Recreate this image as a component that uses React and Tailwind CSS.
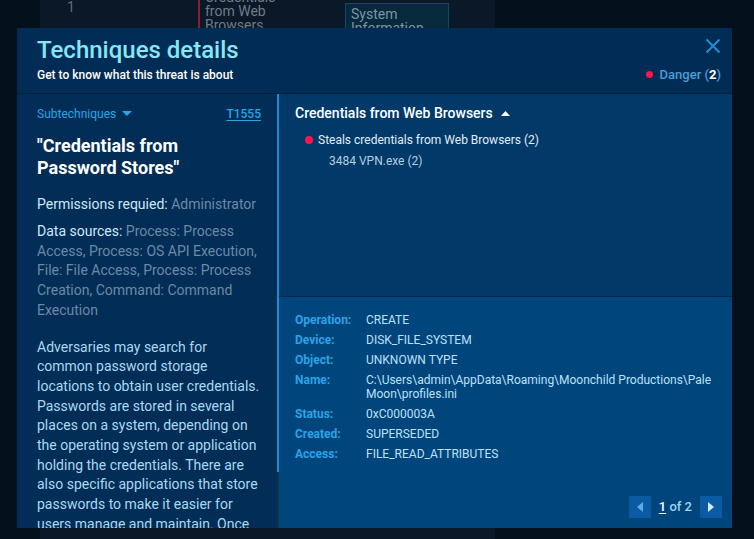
import React from "react";

const rows = [
  ["Operation:", "CREATE"],
  ["Device:", "DISK_FILE_SYSTEM"],
  ["Object:", "UNKNOWN TYPE"],
  ["Name:", "C:\\Users\\admin\\AppData\\Roaming\\Moonchild Productions\\Pale Moon\\profiles.ini"],
  ["Status:", "0xC000003A"],
  ["Created:", "SUPERSEDED"],
  ["Access:", "FILE_READ_ATTRIBUTES"],
];

export default function App() {
  return (
    <div
      className="relative w-[754px] h-[539px] overflow-hidden bg-[#04101c]"
      style={{ fontFamily: "Roboto, 'Noto Sans', sans-serif" }}
    >
      {/* background page */}
      <div className="flex h-full">
        <div className="w-[40px]" />
        <div className="w-[455px] h-full bg-[#0a1828] flex items-start">
          <div className="w-[158px] pl-[27px] text-[14px] text-[#5f6d7b] leading-[14px] pt-0">1</div>
          <div className="w-[147px] h-[28px] border-l-2 border-[#8a1e2e] pl-[5px] overflow-visible">
            <div className="-mt-[10px] text-[14px] leading-[14px] text-[#6f7c88]">
              Credentials
              <br />
              from Web
              <br />
              Browsers
            </div>
          </div>
          <div className="mt-[3px] w-[104px] h-[40px] border border-[#0c4a66] bg-[#062a3c] px-[5px] pt-[3px] text-[14px] leading-[14px] text-[#7d94a6]">
            System
            <br />
            Information
          </div>
        </div>
      </div>

      {/* modal overlay */}
      <div className="absolute left-[17px] top-[28px] w-[715px] h-[500px] flex flex-col bg-[#012c55] overflow-hidden">
        <div className="h-[66px] shrink-0 flex justify-between border-b border-[#01213f] pl-[20px] pr-[11px]">
          <div className="pt-[7px]">
            <div className="text-[24px] leading-[30px] font-medium text-[#86e8f7]">Techniques details</div>
            <div className="mt-[2px] text-[12px] leading-[16px] font-medium text-white">
              Get to know what this threat is about
            </div>
          </div>
          <div className="flex flex-col items-end pt-[10px]">
            <svg width="16" height="16" viewBox="0 0 16 16">
              <path d="M1.5 1.5 L14.5 14.5 M14.5 1.5 L1.5 14.5" stroke="#1d8fd0" strokeWidth="2" fill="none" />
            </svg>
            <div className="mt-[12px] flex items-center text-[13px] leading-[17px] font-medium text-[#4a9fd6]">
              <span className="w-[7px] h-[7px] rounded-full bg-[#ff1450] mr-[7px]" />
              Danger (<span className="text-white font-bold">2</span>)
            </div>
          </div>
        </div>

        <div className="flex flex-1 min-h-0">
          {/* left panel */}
          <div className="relative w-[262px] shrink-0 bg-[#022d56] overflow-hidden">
            <div className="absolute right-0 top-0 w-[2px] h-[378px] bg-[#1a8dd0]" />
            <div className="absolute right-0 top-[378px] bottom-0 w-[2px] bg-[#0a3358]" />
            <div className="pl-[20px] pr-[18px] pt-[12px]">
              <div className="flex justify-between items-center text-[12px] leading-[16px]">
                <div className="flex items-center text-[#27a6e6]">
                  Subtechniques
                  <svg width="10" height="6" viewBox="0 0 10 6" className="ml-[6px]">
                    <path d="M0 0 L10 0 L5 5 Z" fill="#27a6e6" />
                  </svg>
                </div>
                <div className="text-[#27a6e6] font-medium underline underline-offset-2">T1555</div>
              </div>
              <div className="mt-[13px] text-[18px] leading-[22px] font-bold text-white">
                "Credentials from
                <br />
                Password Stores"
              </div>
              <div className="mt-[15px] text-[14px] leading-[20px] text-[#6b8aa6]">
                <span className="text-[#cde8f8]">Permissions requied:</span> Administrator
              </div>
              <div className="mt-[8px] text-[14px] leading-[19.7px] text-[#6b8aa6]">
                <span className="text-[#cde8f8]">Data sources:</span> Process: Process Access, Process: OS API Execution, File: File Access, Process: Process Creation, Command: Command Execution
              </div>
              <div className="mt-[17px] text-[14px] leading-[19.7px] text-[#a9d9f2]">
                Adversaries may search for common password storage locations to obtain user credentials. Passwords are stored in several places on a system, depending on the operating system or application holding the credentials. There are also specific applications that store passwords to make it easier for users manage and maintain. Once credentials are obtained, they can be used to perform lateral movement.
              </div>
            </div>
          </div>

          {/* right panel */}
          <div className="flex-1 flex flex-col min-w-0">
            <div className="h-[202px] shrink-0 bg-[#013a69] pl-[16px] pt-[9px]">
              <div className="flex items-center text-[14px] leading-[20px] font-medium text-white">
                Credentials from Web Browsers
                <svg width="9" height="5" viewBox="0 0 9 5" className="ml-[8px]">
                  <path d="M0 5 L9 5 L4.5 0 Z" fill="#ffffff" />
                </svg>
              </div>
              <div className="mt-[9px] ml-[10px] flex items-center text-[12px] leading-[16px] text-[#e2edf6]">
                <span className="w-[8px] h-[8px] rounded-full bg-[#ff1450] mr-[5px]" />
                Steals credentials from Web Browsers (2)
              </div>
              <div className="mt-[5px] ml-[34px] text-[12px] leading-[16px] text-[#b7cde0]">3484 VPN.exe (2)</div>
            </div>
            <div className="flex-1 flex flex-col border-t border-[#01284a] bg-[#00467d] pl-[16px] pr-[10px] pt-[16px]">
              <div className="flex flex-col gap-[6px]">
                {rows.map(([k, v]) => (
                  <div key={k} className="flex text-[12px] leading-[14px]">
                    <div className="w-[71px] shrink-0 font-bold text-[#2ba3e6]">{k}</div>
                    <div className="flex-1 text-[#bde0f7]">{v}</div>
                  </div>
                ))}
              </div>
              <div className="mt-auto mb-[10px] flex items-center justify-end gap-[8px]">
                <div className="w-[22px] h-[22px] bg-[#0a5ba3] flex items-center justify-center">
                  <svg width="6" height="10" viewBox="0 0 6 10">
                    <path d="M6 0 L6 10 L0 5 Z" fill="#5aaee3" />
                  </svg>
                </div>
                <div className="text-[13px] leading-[16px] font-medium text-[#9fd3f2]">
                  <span className="underline underline-offset-2 text-white">1</span> of 2
                </div>
                <div className="w-[22px] h-[22px] bg-[#0a5ba3] flex items-center justify-center">
                  <svg width="6" height="10" viewBox="0 0 6 10">
                    <path d="M0 0 L0 10 L6 5 Z" fill="#cfeafc" />
                  </svg>
                </div>
              </div>
            </div>
          </div>
        </div>
      </div>
    </div>
  );
}
